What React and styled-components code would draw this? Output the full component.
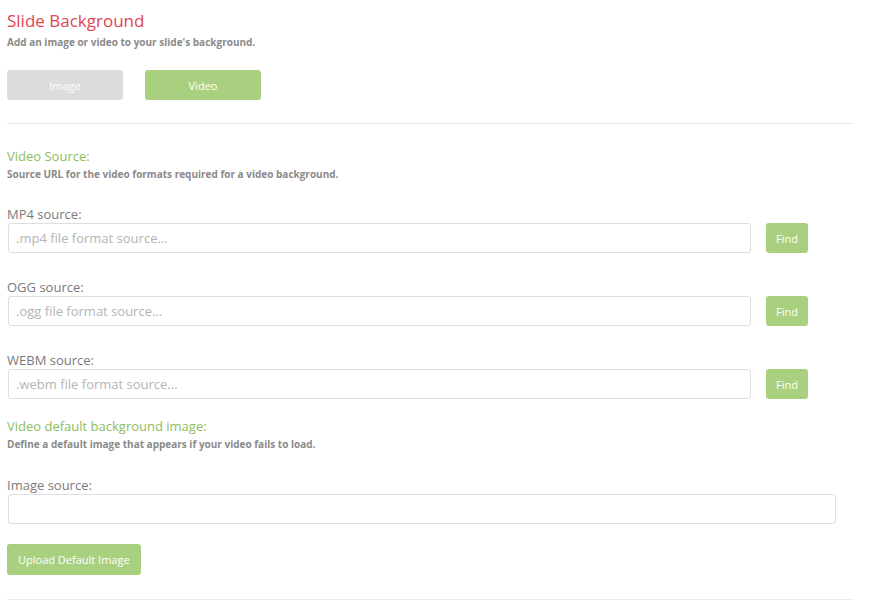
import React from 'react';
import styled, { createGlobalStyle } from 'styled-components';

const GlobalStyle = createGlobalStyle`
  body {
    margin: 0;
    background: #ffffff;
    font-family: "Open Sans", "Liberation Sans", sans-serif;
  }
`;

const Page = styled.div`
  width: 846px;
  padding: 10px 0 0 7px;
`;

const Title = styled.h1`
  margin: 0;
  font-size: 17px;
  line-height: 22px;
  font-weight: 400;
  color: #e04651;
`;

const SectionTitle = styled.h2`
  margin: 0;
  font-size: 13px;
  line-height: 18px;
  font-weight: 400;
  color: #8dbd5c;
`;

const Hint = styled.p`
  margin: ${p => p.$gap ?? 2}px 0 0;
  font-size: 10px;
  line-height: 14px;
  font-weight: 700;
  color: #8a8a8a;
`;

const Toggle = styled.div`
  display: flex;
  gap: 22px;
  margin-top: ${p => p.$top}px;
`;

const Button = styled.button`
  box-sizing: border-box;
  height: ${p => p.$tall ? 31 : 30}px;
  width: ${p => p.$width ? `${p.$width}px` : 'auto'};
  padding: 0 ${p => p.$tall ? 11 : 10}px;
  border: none;
  border-radius: 3px;
  background: ${p => p.$off ? '#dcdcdc' : '#a9d07e'};
  color: #ffffff;
  font-family: inherit;
  font-size: 11px;
  flex-shrink: 0;
`;

const Rule = styled.hr`
  margin: ${p => p.$top}px 0 0;
  border: none;
  border-top: 1px solid #ececec;
`;

const Field = styled.div`
  margin-top: ${p => p.$top}px;
`;

const Label = styled.div`
  font-size: 13px;
  line-height: 18px;
  color: #7a7a7a;
  margin-bottom: 0;
`;

const Row = styled.div`
  display: flex;
  gap: 15px;
  align-items: center;
`;

const Input = styled.input`
  box-sizing: border-box;
  width: ${p => p.$width}px;
  height: 30px;
  margin-left: 1px;
  padding: 0 7px;
  border: 1px solid #dedede;
  border-radius: 3px;
  font-family: inherit;
  font-size: 13px;
  color: #555;
  outline: none;
  &::placeholder {
    color: #b4b4b4;
  }
`;

const sources = [
  { label: 'MP4 source:', ph: '.mp4 file format source...', top: 24 },
  { label: 'OGG source:', ph: '.ogg file format source...', top: 25 },
  { label: 'WEBM source:', ph: '.webm file format source...', top: 25 },
];

const App = () => {
  return (
    <>
      <GlobalStyle />
      <Page>
        <Title>Slide Background</Title>
        <Hint $gap={3}>Add an image or video to your slide's background.</Hint>
        <Toggle $top={21}>
          <Button $off $width={116}>Image</Button>
          <Button $width={116}>Video</Button>
        </Toggle>
        <Rule $top={23} />

        <Field $top={23}>
          <SectionTitle>Video Source:</SectionTitle>
          <Hint>Source URL for the video formats required for a video background.</Hint>
        </Field>

        {sources.map(s => (
          <Field $top={s.top} key={s.label}>
            <Label>{s.label}</Label>
            <Row>
              <Input $width={743} placeholder={s.ph} />
              <Button>Find</Button>
            </Row>
          </Field>
        ))}

        <Field $top={18}>
          <SectionTitle>Video default background image:</SectionTitle>
          <Hint>Define a default image that appears if your video fails to load.</Hint>
        </Field>

        <Field $top={25}>
          <Label>Image source:</Label>
          <Input $width={828} />
        </Field>

        <Toggle $top={20}>
          <Button $tall>Upload Default Image</Button>
        </Toggle>
        <Rule $top={24} />
      </Page>
    </>
  );
};

export default App;
